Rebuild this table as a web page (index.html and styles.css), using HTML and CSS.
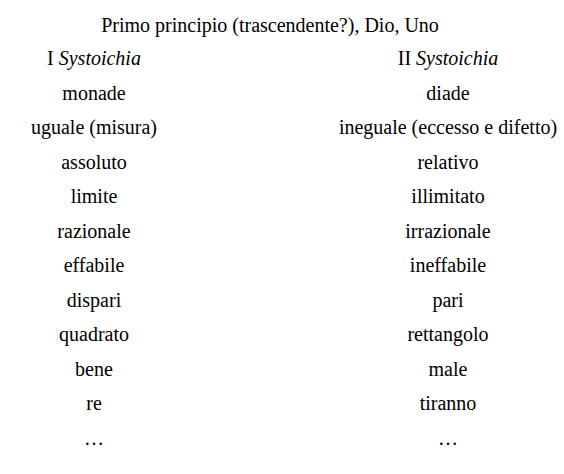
FILE: index.html
```html
<!DOCTYPE html>
<html lang="it">
<head>
<meta charset="utf-8">
<title>Systoichia</title>
<link rel="stylesheet" href="styles.css">
</head>
<body>
<div class="page">
  <div class="title">Primo principio (trascendente?), Dio, Uno</div>
  <div class="table">
    <div class="cell">I <em>Systoichia</em></div>
    <div class="cell">II <em>Systoichia</em></div>
    <div class="cell">monade</div>
    <div class="cell">diade</div>
    <div class="cell">uguale (misura)</div>
    <div class="cell">ineguale (eccesso e difetto)</div>
    <div class="cell">assoluto</div>
    <div class="cell">relativo</div>
    <div class="cell">limite</div>
    <div class="cell">illimitato</div>
    <div class="cell">razionale</div>
    <div class="cell">irrazionale</div>
    <div class="cell">effabile</div>
    <div class="cell">ineffabile</div>
    <div class="cell">dispari</div>
    <div class="cell">pari</div>
    <div class="cell">quadrato</div>
    <div class="cell">rettangolo</div>
    <div class="cell">bene</div>
    <div class="cell">male</div>
    <div class="cell">re</div>
    <div class="cell">tiranno</div>
    <div class="cell">…</div>
    <div class="cell">…</div>
  </div>
</div>
</body>
</html>
```
FILE: styles.css
```css
html, body {
  margin: 0;
  padding: 0;
  background: #ffffff;
}
.page {
  width: 564px;
  padding-top: 9px;
  font-family: "Liberation Serif", "Times New Roman", serif;
  font-size: 20px;
  color: #000000;
}
.title {
  width: 540px;
  text-align: center;
  line-height: 32px;
}
.table {
  display: grid;
  grid-template-columns: 188px 232px;
  column-gap: 144px;
}
.cell {
  text-align: center;
  line-height: 34.55px;
  white-space: nowrap;
}
.cell em {
  font-style: italic;
}
```
